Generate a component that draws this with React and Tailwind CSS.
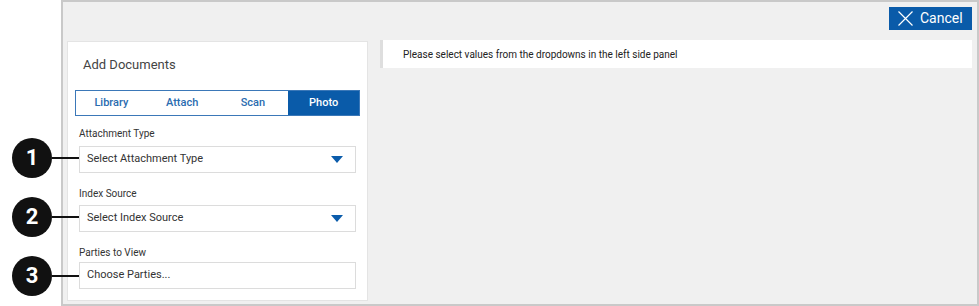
import { useState } from 'react';

const tabs = ['Library', 'Attach', 'Scan', 'Photo'];

const Caret = () => (
  <svg width="12" height="7" viewBox="0 0 12 7" className="shrink-0">
    <path d="M0 0 H12 L6 7 Z" fill="#0b5cab" />
  </svg>
);

const Callout = ({ n, top }) => (
  <div className="absolute left-[12px] flex items-center" style={{ top }}>
    <div className="w-[40px] h-[40px] rounded-full bg-[#111] flex items-center justify-center text-white text-[22px] font-bold leading-none">
      {n}
    </div>
    <div className="w-[27px] h-[2px] bg-[#111]" />
  </div>
);

const App = () => {
  const [tab, setTab] = useState('Photo');

  return (
    <div className="relative w-[979px] h-[306px] flex bg-white font-['Roboto','Liberation_Sans',sans-serif] overflow-hidden">
      <div className="w-[61px] shrink-0" />
      <div className="flex-1 flex flex-col border-2 border-[#c9c9c9] bg-[#f0f0f0]">
        {/* top bar */}
        <div className="flex justify-end pt-[5px] pr-[5px]">
          <button className="w-[83px] h-[23px] bg-[#0a5ba9] text-white flex items-center gap-[7px] pl-[9px] text-[14px]">
            <svg width="15" height="15" viewBox="0 0 15 15">
              <path d="M0.5 0.5 L14.5 14.5 M14.5 0.5 L0.5 14.5" stroke="white" strokeWidth="1.2" />
            </svg>
            Cancel
          </button>
        </div>

        <div className="flex flex-1 gap-[12px] pl-[4px] pr-[5px] pt-[11px] pb-[3px]">
          {/* left panel */}
          <div className="w-[301px] bg-white border border-[#e4e4e4] flex flex-col">
            <h2 className="text-[13px] text-[#444] pl-[15px] pt-[13px] h-[48px]">Add Documents</h2>
            <div className="mx-[7px] flex border border-[#3b78b8] h-[26px]">
              {tabs.map(t => (
                <button
                  key={t}
                  onClick={() => setTab(t)}
                  className={`flex-1 text-[11px] font-medium ${tab === t ? 'bg-[#0a5ba9] text-white' : 'text-[#2a6cb0]'}`}
                >
                  {t}
                </button>
              ))}
            </div>

            <div className="px-[11px] pt-[11px] flex flex-col">
              <label className="text-[10px] text-[#333] leading-[14px]">Attachment Type</label>
              <div className="mt-[5px] h-[27px] border border-[#dcdcdc] flex items-center justify-between pl-[7px] pr-[12px] text-[11px] text-[#333]">
                Select Attachment Type
                <Caret />
              </div>

              <label className="mt-[14px] text-[10px] text-[#333] leading-[14px]">Index Source</label>
              <div className="mt-[4px] h-[27px] border border-[#dcdcdc] flex items-center justify-between pl-[7px] pr-[12px] text-[11px] text-[#333]">
                Select Index Source
                <Caret />
              </div>

              <label className="mt-[14px] text-[10px] text-[#333] leading-[14px]">Parties to View</label>
              <div className="mt-[2px] h-[27px] border border-[#dcdcdc] flex items-center pl-[7px] text-[11px] text-[#333]">
                Choose Parties...
              </div>
            </div>
          </div>

          {/* right panel */}
          <div className="flex-1 self-start -mt-[1px] h-[28px] bg-white border-l-[3px] border-[#dedede] flex items-center pl-[20px] text-[10px] text-[#222]">
            Please select values from the dropdowns in the left side panel
          </div>
        </div>
      </div>

      <Callout n="1" top={138} />
      <Callout n="2" top={197} />
      <Callout n="3" top={256} />
    </div>
  );
};

export default App;
